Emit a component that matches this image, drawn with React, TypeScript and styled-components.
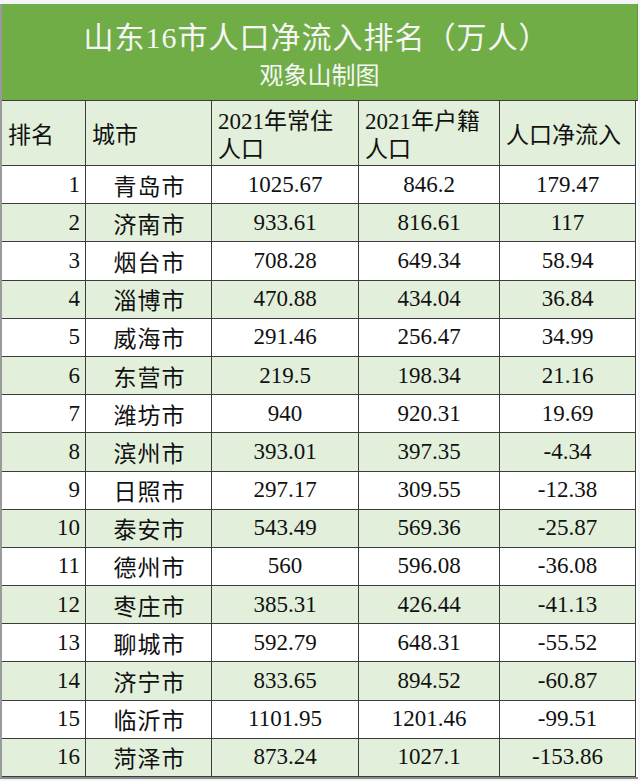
import React from 'react';
import styled, { createGlobalStyle } from 'styled-components';

const GlobalStyle = createGlobalStyle`
  html, body {
    margin: 0;
    padding: 0;
    background: #f3f5f9;
  }
`;

const rows = [
  ['1', '青岛市', '1025.67', '846.2', '179.47'],
  ['2', '济南市', '933.61', '816.61', '117'],
  ['3', '烟台市', '708.28', '649.34', '58.94'],
  ['4', '淄博市', '470.88', '434.04', '36.84'],
  ['5', '威海市', '291.46', '256.47', '34.99'],
  ['6', '东营市', '219.5', '198.34', '21.16'],
  ['7', '潍坊市', '940', '920.31', '19.69'],
  ['8', '滨州市', '393.01', '397.35', '-4.34'],
  ['9', '日照市', '297.17', '309.55', '-12.38'],
  ['10', '泰安市', '543.49', '569.36', '-25.87'],
  ['11', '德州市', '560', '596.08', '-36.08'],
  ['12', '枣庄市', '385.31', '426.44', '-41.13'],
  ['13', '聊城市', '592.79', '648.31', '-55.52'],
  ['14', '济宁市', '833.65', '894.52', '-60.87'],
  ['15', '临沂市', '1101.95', '1201.46', '-99.51'],
  ['16', '菏泽市', '873.24', '1027.1', '-153.86'],
];

const Sheet = styled.div`
  width: 640px;
  height: 781px;
  padding-top: 4px;
  box-sizing: border-box;
  overflow: hidden;
  font-family: "Liberation Serif", "Noto Sans CJK SC", serif;
  color: #111;
`;

const Table = styled.div`
  width: 636px;
  border-left: 2px solid #9a9a9a;
  border-bottom: 2px solid #8a8a8a;
  box-sizing: content-box;
  background: #fff;
`;

const Banner = styled.div`
  height: 96px;
  background: #70ad47;
  display: flex;
  flex-direction: column;
  align-items: center;
  justify-content: center;
  color: #f6f6f6;
  border-right: 1px solid #5f9a3a;
  box-sizing: border-box;
`;

const Title = styled.div`
  font-size: 30px;
  line-height: 36px;
  letter-spacing: 1px;
  margin-left: -6px;
  margin-top: 6px;
`;

const Subtitle = styled.div`
  font-size: 24px;
  line-height: 30px;
  margin-top: 5px;
`;

const Grid = styled.div`
  display: grid;
  grid-template-columns: 84px 126px 147px 141px 136px;
  grid-template-rows: 65px repeat(16, 38.19px);
  border-top: 1px solid #3c3c3c;
`;

const Cell = styled.div<{ $shade: boolean; $align: 'left' | 'center' | 'right' }>`
  background: ${(p) => (p.$shade ? '#e2efda' : '#ffffff')};
  border-right: 1px solid #3c3c3c;
  border-bottom: 1px solid #3c3c3c;
  display: flex;
  align-items: center;
  justify-content: ${(p) =>
    p.$align === 'left' ? 'flex-start' : p.$align === 'right' ? 'flex-end' : 'center'};
  padding: 0 5px;
  font-size: 23px;
  white-space: nowrap;
  overflow: hidden;
`;

const HeadCell = styled(Cell)`
  align-items: flex-start;
  flex-direction: column;
  justify-content: center;
  line-height: 28px;
  padding-left: 6px;
  padding-top: 6px;
`;

const WrapHead = styled(HeadCell)`
  justify-content: flex-start;
  padding-top: 7px;
`;

const CityText = styled.span`
  letter-spacing: 1px;
  margin-left: 2px;
`;

const aligns: ('right' | 'center')[] = ['right', 'center', 'center', 'center', 'center'];

export default function App() {
  return (
    <>
      <GlobalStyle />
      <Sheet>
        <Table>
          <Banner>
            <Title>山东16市人口净流入排名（万人）</Title>
            <Subtitle>观象山制图</Subtitle>
          </Banner>
          <Grid>
            <HeadCell $shade $align="left">排名</HeadCell>
            <HeadCell $shade $align="left">城市</HeadCell>
            <WrapHead $shade $align="left">
              <span>2021年常住</span>
              <span>人口</span>
            </WrapHead>
            <WrapHead $shade $align="left">
              <span>2021年户籍</span>
              <span>人口</span>
            </WrapHead>
            <HeadCell $shade $align="left">人口净流入</HeadCell>
            {rows.map((r, i) =>
              r.map((v, j) => (
                <Cell key={`${i}-${j}`} $shade={i % 2 === 1} $align={aligns[j]}>
                  {j === 1 ? <CityText>{v}</CityText> : v}
                </Cell>
              ))
            )}
          </Grid>
        </Table>
      </Sheet>
    </>
  );
}
